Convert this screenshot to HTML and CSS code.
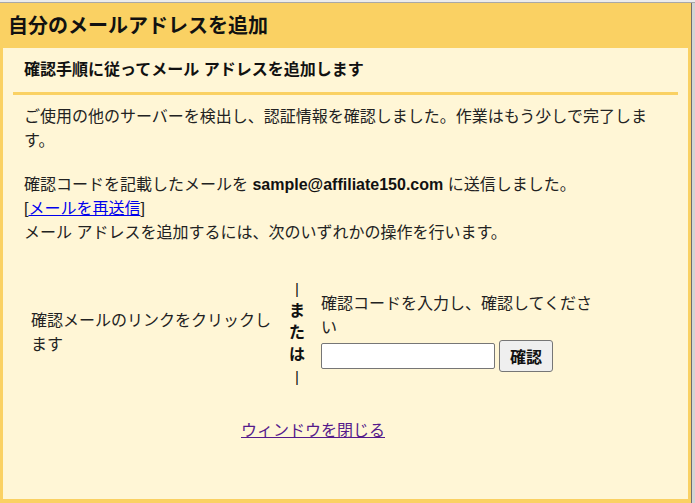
FILE: index.html
```html
<!DOCTYPE html>
<html lang="ja">
<head>
<meta charset="utf-8">
<title>自分のメールアドレスを追加</title>
<link rel="stylesheet" href="styles.css">
</head>
<body>
<div class="screen">
  <div class="topbar"></div>
  <div class="stage">
    <div class="dialog">
      <div class="dialog-title">自分のメールアドレスを追加</div>
      <div class="dialog-body">
        <div class="subtitle">確認手順に従ってメール アドレスを追加します</div>
        <div class="content">
          <p class="intro">ご使用の他のサーバーを検出し、認証情報を確認しました。作業はもう少しで完了します。</p>
          <p class="sent">確認コードを記載したメールを <b class="email">sample@affiliate150.com</b> に送信しました。<br>[<a href="#" class="resend">メールを再送信</a>]<br>メール アドレスを追加するには、次のいずれかの操作を行います。</p>
          <div class="choices">
            <div class="choice choice-left">確認メールのリンクをクリックします</div>
            <div class="or"><span class="bar">|</span><br>ま<br>た<br>は<br><span class="bar">|</span></div>
            <div class="choice choice-right">
              <div>確認コードを入力し、確認してください</div>
              <div class="code-row">
                <input type="text" class="code-input">
                <button type="button" class="verify-btn">確認</button>
              </div>
            </div>
          </div>
          <div class="close-row"><a href="#" class="close-link">ウィンドウを閉じる</a></div>
        </div>
      </div>
    </div>
    <div class="edge"></div>
  </div>
</div>
</body>
</html>
```

FILE: styles.css
```css
html, body {
  margin: 0;
  padding: 0;
}

body {
  width: 695px;
  height: 503px;
  overflow: hidden;
  background: #d6d6d6;
  font-family: "Liberation Sans", "Noto Sans CJK JP", sans-serif;
  color: #222;
}

.screen {
  display: flex;
  flex-direction: column;
  width: 695px;
  height: 503px;
}

.topbar {
  height: 2px;
  background: #ececec;
  border-bottom: 1px solid #a8a8a8;
  flex: none;
}

.stage {
  display: flex;
  flex: 1;
  min-height: 0;
}

.dialog {
  width: 691px;
  background: #fad163;
  padding: 0 3px 4px;
  box-sizing: border-box;
  display: flex;
  flex-direction: column;
}

.edge {
  flex: 1;
  border-left: 1px solid #6e6e6e;
  background: #d4d4d4;
}

.dialog-title {
  height: 45px;
  line-height: 46px;
  padding-left: 5px;
  font-size: 20px;
  font-weight: bold;
  color: #111;
  flex: none;
}

.dialog-body {
  flex: 1;
  background: #fff6d6;
  padding: 0 10px;
}

.subtitle {
  padding: 10px 11px;
  line-height: 24px;
  font-size: 16px;
  font-weight: bold;
  color: #111;
  border-bottom: 3px solid #fad163;
}

.content {
  padding: 0 11px;
  font-size: 16px;
  line-height: 24px;
}

.content p {
  margin: 0;
}

.intro {
  padding-top: 10px;
}

.sent {
  padding-top: 20px;
}

.email {
  font-weight: bold;
  color: #111;
}

.resend {
  color: #0000ee;
  text-decoration: underline;
}

.choices {
  margin-top: 25px;
  width: 578px;
  display: grid;
  grid-template-columns: 256px 34px 288px;
  align-items: center;
}

.choice {
  padding: 0 7px;
}

.or {
  padding: 8px 0;
  text-align: center;
  font-weight: bold;
  line-height: 22px;
  color: #111;
}

.bar {
  font-weight: normal;
  font-size: 15px;
}

.choice-right {
  margin-top: -3px;
}

.code-row {
  display: flex;
  align-items: center;
  gap: 4px;
}

.code-input {
  width: 174px;
  height: 26px;
  box-sizing: border-box;
  border: 1px solid #767676;
  border-radius: 2px;
  background: #fff;
  margin: 0;
  padding: 1px 2px;
  font: 16px "Liberation Sans", sans-serif;
}

.verify-btn {
  width: 54px;
  height: 32px;
  box-sizing: border-box;
  border: 1px solid #767676;
  border-radius: 3px;
  background: #efefef;
  margin: 0;
  padding: 0;
  font-family: "Liberation Sans", "Noto Sans CJK JP", sans-serif;
  font-size: 16px;
  font-weight: bold;
  color: #111;
}

.close-row {
  width: 578px;
  margin-top: 23px;
  text-align: center;
}

.close-link {
  color: #551a8b;
  text-decoration: underline;
}
```
